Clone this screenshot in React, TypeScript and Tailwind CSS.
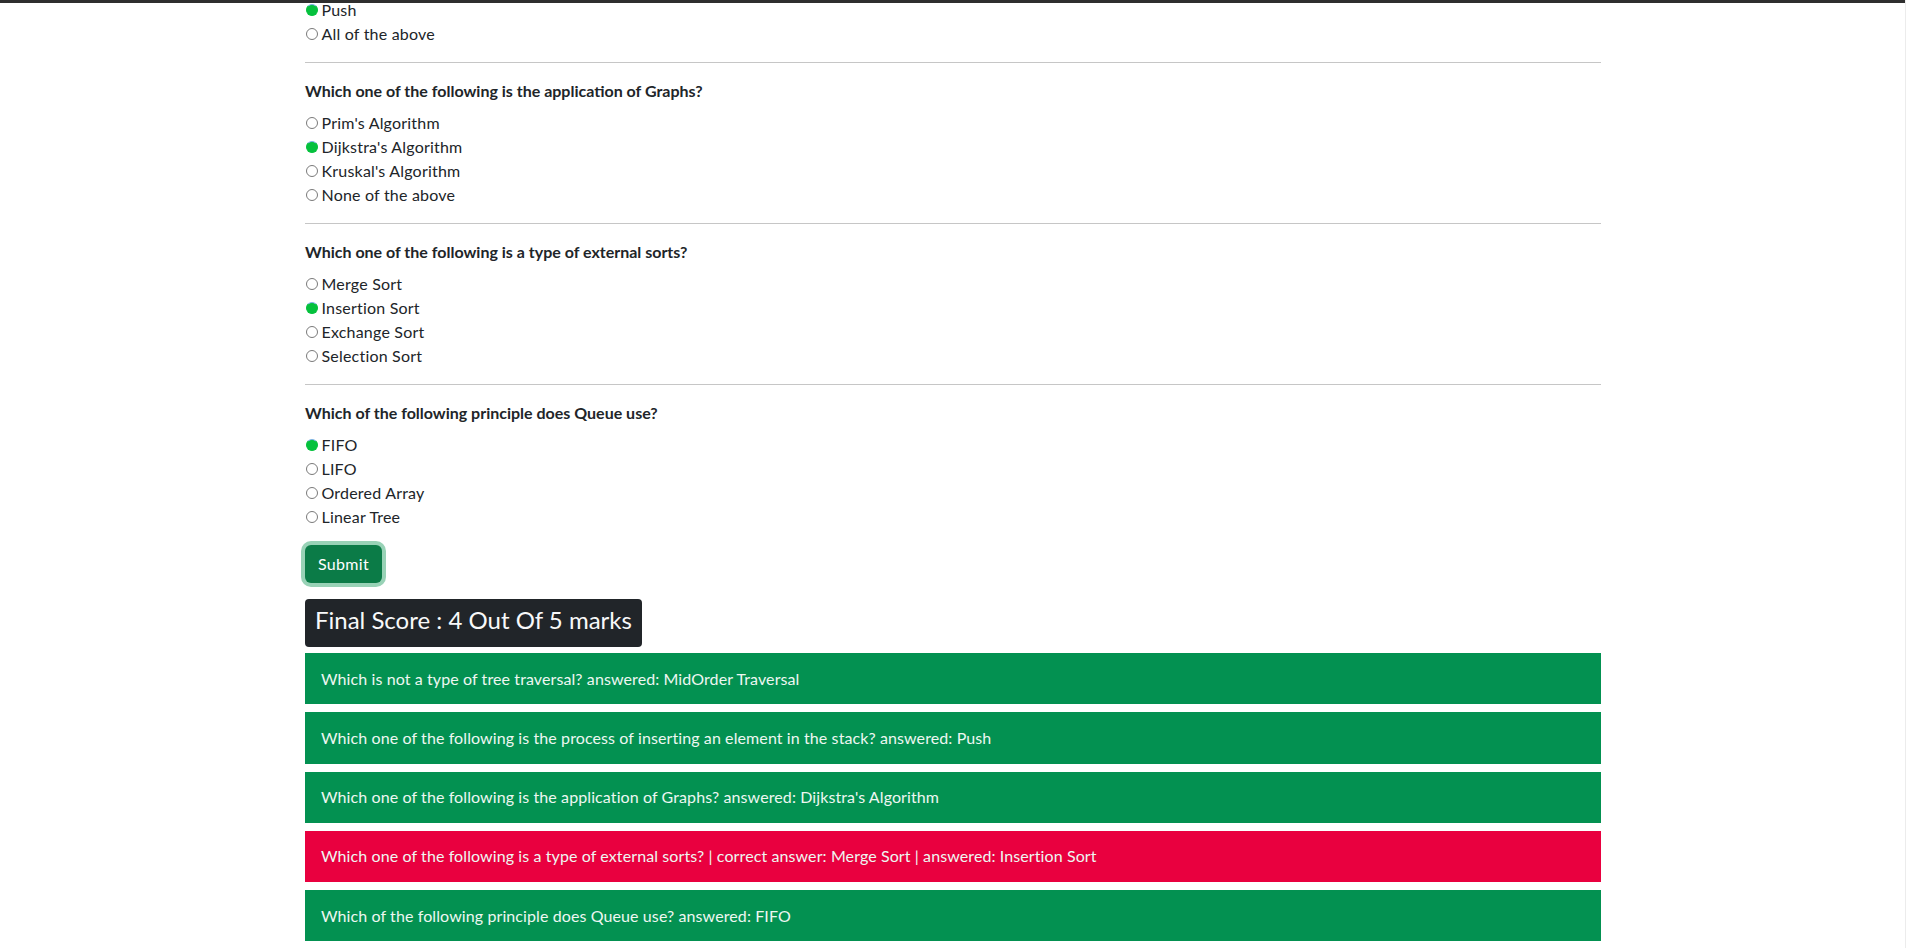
import React from 'react';

type Question = {
  title?: string;
  options: string[];
  picked: number;
};

const QUESTIONS: Question[] = [
  { options: ['Push', 'All of the above'], picked: 0 },
  {
    title: 'Which one of the following is the application of Graphs?',
    options: ["Prim's Algorithm", "Dijkstra's Algorithm", "Kruskal's Algorithm", 'None of the above'],
    picked: 1,
  },
  {
    title: 'Which one of the following is a type of external sorts?',
    options: ['Merge Sort', 'Insertion Sort', 'Exchange Sort', 'Selection Sort'],
    picked: 1,
  },
  {
    title: 'Which of the following principle does Queue use?',
    options: ['FIFO', 'LIFO', 'Ordered Array', 'Linear Tree'],
    picked: 0,
  },
];

const RESULTS = [
  { text: 'Which is not a type of tree traversal? answered: MidOrder Traversal', ok: true },
  { text: 'Which one of the following is the process of inserting an element in the stack? answered: Push', ok: true },
  { text: "Which one of the following is the application of Graphs? answered: Dijkstra's Algorithm", ok: true },
  {
    text: 'Which one of the following is a type of external sorts? | correct answer: Merge Sort | answered: Insertion Sort',
    ok: false,
  },
  { text: 'Which of the following principle does Queue use? answered: FIFO', ok: true },
];

function Radio({ checked }: { checked: boolean }) {
  return checked ? (
    <span className="mr-[4px] inline-block h-[12px] w-[12px] shrink-0 rounded-full border border-[#05c13d] border-t-[#7fb0e8] bg-[#05c13d]" />
  ) : (
    <span className="mr-[4px] inline-block h-[12px] w-[12px] shrink-0 rounded-full border border-[#7a7a7a] bg-white" />
  );
}

function OptionList({ q }: { q: Question }) {
  return (
    <div className="tracking-[0.2px]">
      {q.options.map((opt, i) => (
        <label key={opt} className="flex h-[24px] items-center pl-[0.5px]">
          <Radio checked={i === q.picked} />
          <span>{opt}</span>
        </label>
      ))}
    </div>
  );
}

export default function App() {
  return (
    <div
      className="relative min-h-[948px] overflow-hidden bg-white text-[16px] leading-[24px] text-[#212529]"
      style={{ fontFamily: 'Lato, "Noto Sans", sans-serif' }}
    >
      <div className="absolute left-0 right-0 top-0 h-[3px] bg-[#2f2f2f]" />
      <div className="absolute bottom-0 right-0 top-0 w-px bg-[#ececec]" />

      <div className="mx-auto w-[1320px] px-3">
        <div className="-mt-[2px]">
          <OptionList q={QUESTIONS[0]} />
        </div>

        {QUESTIONS.slice(1).map((q) => (
          <div key={q.title}>
            <hr className="my-4 border-0 border-t border-[#c6c6c6]" />
            <div className="mb-2 font-bold">{q.title}</div>
            <OptionList q={q} />
          </div>
        ))}

        <button
          type="button"
          className="mt-4 h-[38px] w-[77px] rounded-[6px] bg-[#0b7b47] text-center font-normal tracking-[0.3px] text-white shadow-[0_0_0_4px_#98d2b6]"
        >
          Submit
        </button>

        <div className="mt-4">
          <div className="inline-block h-[48px] rounded-[4px] bg-[#212529] px-[10px] text-[24px] leading-[42px] text-[#f8f9fa]">
            Final Score : 4 Out Of 5 marks
          </div>
        </div>

        <div className="mt-[6px] flex flex-col gap-[8px]">
          {RESULTS.map((r) => (
            <div
              key={r.text}
              className={`flex h-[51.25px] items-center px-4 tracking-[0.1px] text-[#eef7f1] ${r.ok ? 'bg-[#039151]' : 'bg-[#e9003f]'}`}
            >
              {r.text}
            </div>
          ))}
        </div>
      </div>
    </div>
  );
}
